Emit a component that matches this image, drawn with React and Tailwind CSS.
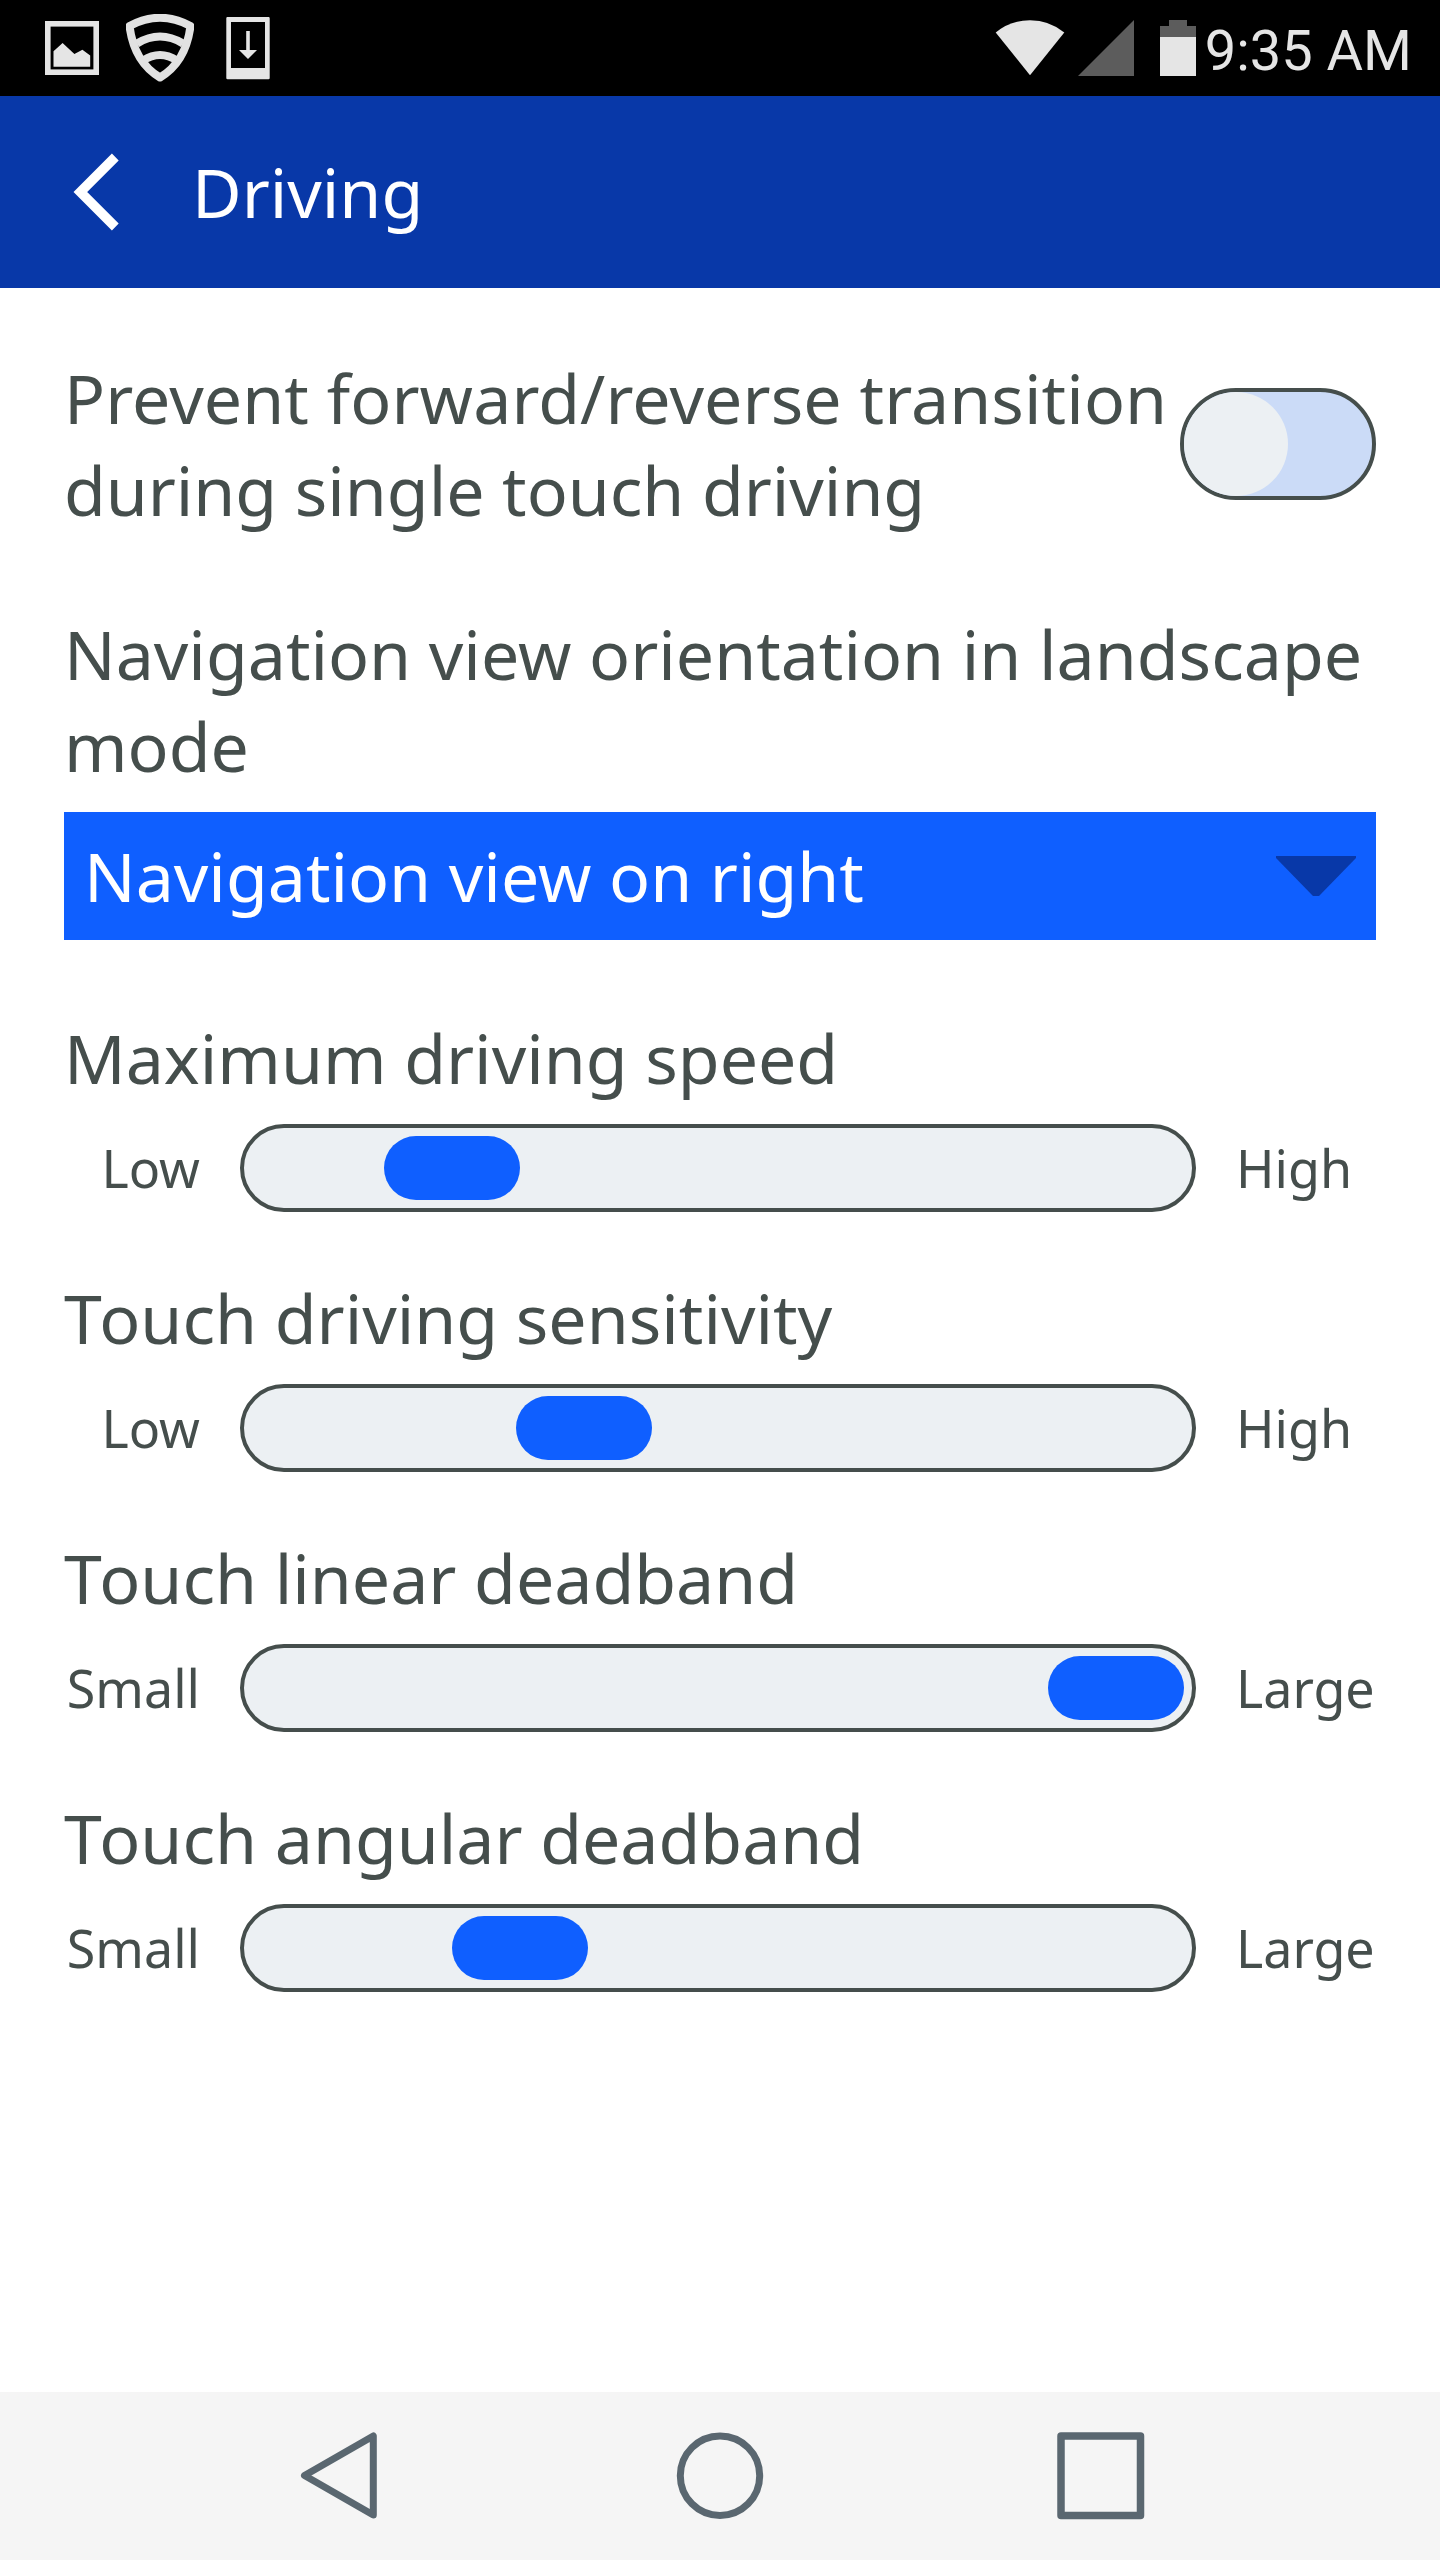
const sliders = [
  { title: 'Maximum driving speed', low: 'Low', high: 'High', offset: 132 },
  { title: 'Touch driving sensitivity', low: 'Low', high: 'High', offset: 264, tight: true },
  { title: 'Touch linear deadband', low: 'Small', high: 'Large', offset: 796, tight: true },
  { title: 'Touch angular deadband', low: 'Small', high: 'Large', offset: 200, tight: true },
];

function StatusBar() {
  return (
    <div className="flex h-[96px] items-center justify-between bg-black pl-[45px] pr-[28px]">
      <div className="flex h-full items-start">
        <svg className="mt-[21px]" width="54" height="54" viewBox="0 0 54 54">
          <rect x="2.8" y="2.8" width="48.4" height="48.4" fill="none" stroke="#e5e5e5" strokeWidth="5.6" />
          <path d="M8.5 45.7V30.3L17.6 22l11.8 11 8-4.2 7.8 5.6v11.3z" fill="#e5e5e5" />
        </svg>
        <svg className="ml-[27px] mt-[14px] blur-[0.6px]" width="68" height="68" viewBox="0 0 68 68" fill="none" stroke="#e2e2e2" strokeWidth="8">
          <path d="M3.500 12Q34-4.500 64.500 12Q60 48 34 63.500Q8 48 3.500 12Z" strokeLinejoin="round" />
          <path d="M11 29.500Q34 15.500 57 29.500" />
          <path d="M17 46.500Q34 35.500 51 46.500" />
        </svg>
        <svg className="ml-[32px] mt-[17px]" width="44" height="63" viewBox="0 0 44 63">
          <path fillRule="evenodd" d="M1.500 0h41a1.200 1.200 0 0 1 1.200 1.200v59.800a1.200 1.200 0 0 1-1.200 1.200h-41a1.200 1.200 0 0 1-1.200-1.200V1.200A1.200 1.200 0 0 1 1.500 0zM5 5v46h34V5z" fill="#e5e5e5" />
          <path d="M20.200 14h3.600v19H31l-9 9-9-9h7.200z" fill="#e5e5e5" />
        </svg>
      </div>
      <div className="flex h-full items-start">
        <svg className="mt-[20px]" width="70" height="56" viewBox="0 0 70 56">
          <path d="M.7 12.600Q15.500.3 35 .3t34.300 12.300L35 55.300z" fill="#e5e5e5" />
        </svg>
        <svg className="ml-[13px] mt-[20px]" width="56" height="56" viewBox="0 0 56 56">
          <path d="M56 0v56H0z" fill="#5c5c5c" />
        </svg>
        <svg className="ml-[26px] mt-[20px]" width="36" height="56" viewBox="0 0 36 56">
          <path d="M9 0h18v6h9v11H0V6h9z" fill="#5c5c5c" />
          <path d="M0 17h36v39H0z" fill="#e5e5e5" />
        </svg>
        <span className="ml-[9px] mt-[18px] whitespace-nowrap font-['Roboto',sans-serif] text-[56px] leading-[66px] text-[#e5e5e5]">
          9:35 AM
        </span>
      </div>
    </div>
  );
}

function Slider({ title, low, high, offset, tight }) {
  return (
    <section className="h-[260px]">
      <h2
        className={
          tight
            ? 'h-[112px] text-[68px] leading-[92px] first-letter:tracking-[-2.6px]'
            : 'h-[112px] text-[68px] leading-[92px]'
        }
      >
        {title}
      </h2>
      <div className="flex h-[88px] items-center">
        <span className="w-[136px] text-right text-[52px] leading-[70px]">{low}</span>
        <div className="mx-[40px] h-[88px] w-[956px] rounded-full border-4 border-[#454e4c] bg-[#ecf0f3] p-2">
          <div className="h-[64px] w-[136px] rounded-full bg-[#0f5fff]" style={{ marginLeft: offset }} />
        </div>
        <span className="text-[52px] leading-[70px]">{high}</span>
      </div>
    </section>
  );
}

export default function App() {
  return (
    <div className="flex h-[2560px] w-[1440px] flex-col overflow-hidden bg-white font-['Noto_Sans',sans-serif] text-[#454e4c]">
      <StatusBar />
      <header className="flex h-[192px] items-center bg-[#0838a8] pl-[72px] text-white">
        <svg width="48" height="80" viewBox="0 0 48 80">
          <path d="M43.300 5L8.300 40l35 35" fill="none" stroke="currentColor" strokeWidth="9.600" />
        </svg>
        <h1 className="ml-[72px] text-[68px] leading-[92px]">Driving</h1>
      </header>
      <main className="flex-1 px-16 pt-[64px]">
        <div className="flex h-[256px] items-start justify-between">
          <p className="whitespace-nowrap text-[68px] leading-[92px]">
            <span className="tracking-[0.09px]">Prevent forward/reverse transition</span>
            <br />
            <span className="tracking-[-0.03px]">during single touch driving</span>
          </p>
          <div className="mt-[36px] h-[112px] w-[196px] shrink-0 rounded-full border-4 border-[#454e4c] bg-[#cbdbf7]">
            <div className="size-[104px] rounded-full bg-[#ecf0f3]" />
          </div>
        </div>
        <p className="h-[204px] whitespace-nowrap text-[68px] leading-[92px]">
          Navigation view orientation in landscape
          <br />
          mode
        </p>
        <div className="mb-[72px] flex h-[128px] items-center justify-between bg-[#0f5fff] px-5 text-white">
          <span className="text-[68px] leading-[92px]">Navigation view on right</span>
          <svg width="80" height="40" viewBox="0 0 80 40">
            <path d="M0 0h80v2L43 40h-6L0 2z" fill="#0838a8" />
          </svg>
        </div>
        {sliders.map((s) => (
          <Slider key={s.title} {...s} />
        ))}
      </main>
      <nav className="flex h-[168px] items-center bg-[#f5f5f5] pl-[300px] text-[#5a6770]">
        <svg width="78" height="88" viewBox="0 0 78 88" fill="none" stroke="currentColor" strokeWidth="7" strokeLinejoin="round">
          <path d="M73.300 4v79L4.500 43.500z" />
        </svg>
        <svg className="ml-[298px]" width="88" height="88" viewBox="0 0 88 88" fill="none" stroke="currentColor" strokeWidth="7">
          <circle cx="44" cy="43.700" r="39.700" />
        </svg>
        <svg className="ml-[293px]" width="88" height="88" viewBox="0 0 88 88" fill="none" stroke="currentColor" strokeWidth="7.500" strokeLinejoin="round">
          <rect x="4" y="4" width="79.500" height="79.500" />
        </svg>
      </nav>
    </div>
  );
}
